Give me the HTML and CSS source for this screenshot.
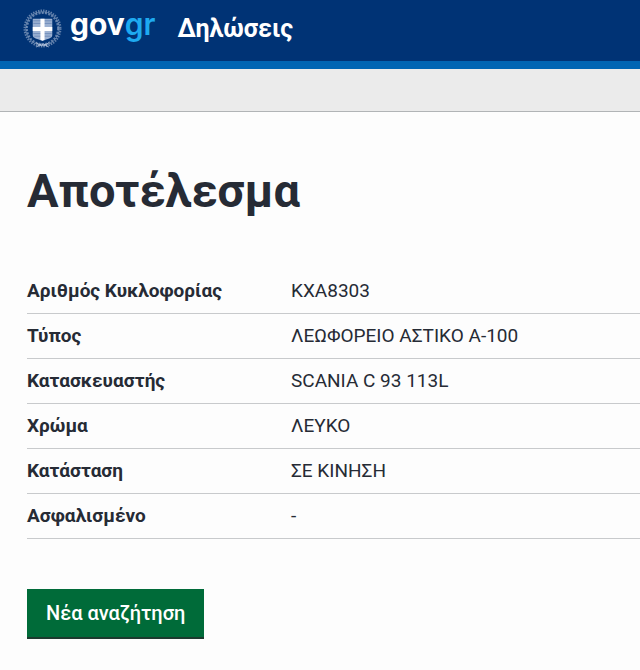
FILE: index.html
```html
<!DOCTYPE html>
<html lang="el">
<head>
    <meta charset="UTF-8">
    <meta name="viewport" content="width=device-width, initial-scale=1.0">
    <title>Δηλώσεις - Αποτέλεσμα</title>
    <link rel="stylesheet" href="styles.css">
</head>
<body>

    <header class="header">
        <a href="#" class="logo">
            <svg class="emblem" viewBox="0 0 38 38" aria-hidden="true">
                <!-- laurel wreath -->
                <g fill="none" stroke="#c3d0e4">
                    <circle cx="19" cy="19" r="17.5" stroke-width="2" stroke-dasharray="1.4 1.1" opacity=".5"/>
                    <circle cx="19" cy="19" r="15.2" stroke-width="2" stroke-dasharray="2 1.2" opacity=".5"/>
                    <circle cx="19" cy="19" r="16.3" stroke-width=".6" opacity=".6"/>
                    <path d="M13 33l5 3 2-2 5 3M25 33l-5 3-2-2-5 3" stroke-width=".8"/>
                </g>
                <!-- shield -->
                <path d="M9.500 9.500h19v16c0 3-4.500 3.500-9.500 5.500-5-2-9.500-2.500-9.500-5.500z" fill="#9db2d2"/>
                <path d="M10 11.500h18M10 14h18M10 24h18M11 26.500h16" stroke="#5f7fb1" stroke-width=".7"/>
                <path d="M17 9.500h4v8h7.500v4H21v8.500l-2 1-2-1v-8.500H9.500v-4H17z" fill="#fff"/>
            </svg>
            <span class="wordmark">gov<span class="wordmark-gr">gr</span></span>
        </a>
        <a href="#" class="service-name">Δηλώσεις</a>
    </header>
    <div class="subheader"></div>

    <main class="main">
        <h1 class="title">Αποτέλεσμα</h1>

        <dl class="summary">
            <div class="row">
                <dt>Αριθμός Κυκλοφορίας</dt>
                <dd>ΚΧΑ8303</dd>
            </div>
            <div class="row">
                <dt>Τύπος</dt>
                <dd>ΛΕΩΦΟΡΕΙΟ ΑΣΤΙΚΟ Α-100</dd>
            </div>
            <div class="row">
                <dt>Κατασκευαστής</dt>
                <dd>SCANIA C 93 113L</dd>
            </div>
            <div class="row">
                <dt>Χρώμα</dt>
                <dd>ΛΕΥΚΟ</dd>
            </div>
            <div class="row">
                <dt>Κατάσταση</dt>
                <dd>ΣΕ ΚΙΝΗΣΗ</dd>
            </div>
            <div class="row">
                <dt>Ασφαλισμένο</dt>
                <dd>-</dd>
            </div>
        </dl>

        <button type="button" class="button">Νέα αναζήτηση</button>
    </main>

</body>
</html>
```
FILE: styles.css
```css
body {
    margin: 0;
    background: #fdfdfd;
    color: #262b35;
    font-family: Roboto, sans-serif;
    font-size: 19px;
    line-height: 24px;
}

.header {
    display: flex;
    align-items: center;
    gap: 22px;
    padding: 9px 23px 13px;
    background: #003375;
    border-bottom: 8px solid #0065b3;
}

.header a {
    color: #fff;
    text-decoration: none;
}

.logo {
    display: flex;
    align-items: center;
    gap: 8px;
}

.emblem {
    width: 39px;
    height: 39px;
}

.wordmark {
    padding-bottom: 10px;
    font-family: Inter, sans-serif;
    font-size: 30px;
    font-weight: 700;
    line-height: 28px;
}

.wordmark-gr {
    color: #1eaaf0;
    font-weight: 600;
}

.service-name {
    font-size: 25px;
    font-weight: 700;
    line-height: 32px;
}

.subheader {
    height: 42px;
    background: #ebebeb;
    border-bottom: 1px solid #b1b4b6;
}

.main {
    padding: 48px 0 32px 27px;
}

.title {
    margin: 0 0 47px;
    font-size: 47px;
    font-weight: 700;
    line-height: 62px;
}

.summary {
    margin: 0 0 50px;
}

.row {
    display: flex;
    padding: 10px 0;
    border-bottom: 1px solid #c8cacc;
}

.row dt {
    flex: none;
    width: 264px;
    font-weight: 700;
}

.row dd {
    margin: 0;
}

.button {
    padding: 12px 19px;
    border: 0;
    background: #006b39;
    box-shadow: 0 2px 0 #1c3a2e;
    color: #fff;
    font-family: inherit;
    font-size: 20px;
    font-weight: 500;
    line-height: 24px;
    cursor: pointer;
}
```
